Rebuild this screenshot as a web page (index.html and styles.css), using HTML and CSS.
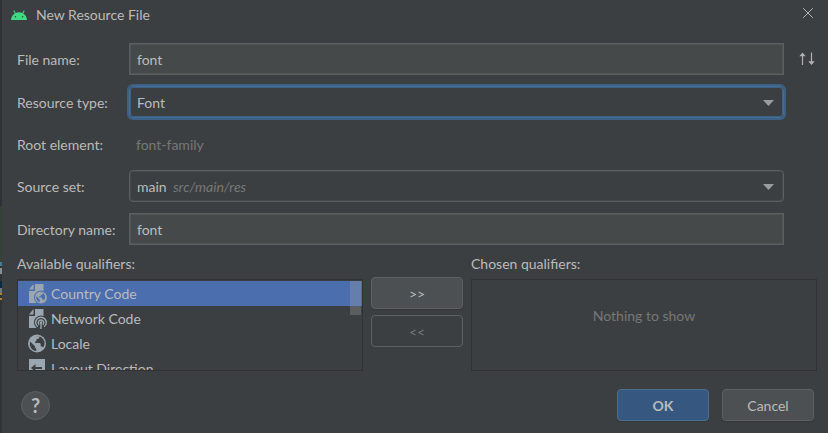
FILE: index.html
```html
<!DOCTYPE html>
<html lang="en">
<head>
<meta charset="utf-8">
<title>New Resource File</title>
<link rel="stylesheet" href="styles.css">
</head>
<body>
<main class="dialog">
  <header class="titlebar">
    <svg class="android" viewBox="0 0 16 10" width="16" height="10" aria-hidden="true">
      <path d="M0 10C.2 7 1.600 4.800 3.800 3.500L2.300.8 3.200.3 4.700 3C6.700 2.100 9.300 2.100 11.300 3L12.800.3 13.700.8 12.200 3.500C14.400 4.800 15.800 7 16 10Z" fill="#3ddc84"/>
      <circle cx="4.400" cy="6.700" r=".8" fill="#3c3f41"/><circle cx="11.600" cy="6.700" r=".8" fill="#3c3f41"/>
    </svg>
    <h1 class="title">New Resource File</h1>
    <button class="icon-button" type="button" aria-label="Close">
      <svg viewBox="0 0 10 10" width="10" height="10"><path d="M.2.2l9.600 9.600M9.800.2L.2 9.800" stroke="#b4b6b8" fill="none"/></svg>
    </button>
  </header>

  <form class="content">
    <div class="fields">
      <label for="file-name">File name:</label>
      <input class="field" id="file-name" type="text" value="font">
      <button class="icon-button sort" type="button" aria-label="Swap order">
        <svg viewBox="0 0 16 14" width="16" height="14"><path d="M3.500 13V2M12.500.5V12" stroke="#afb1b3" stroke-width="1.200" fill="none"/><path d="M.3 4.200L3.500.5l3.200 3.700zM9.300 9.300l3.200 3.700 3.200-3.700z" fill="#afb1b3"/></svg>
      </button>

      <label for="resource-type">Resource type:</label>
      <div class="combo focused">
        <select id="resource-type"><option>Font</option></select>
        <svg class="arrow" viewBox="0 0 11 6" width="11" height="6"><path d="M0 0h11L5.500 6z" fill="#9a9da0"/></svg>
      </div>

      <span class="row-label">Root element:</span>
      <output class="disabled-value">font-family</output>

      <label for="source-set">Source set:</label>
      <div class="combo">
        <select id="source-set"><option>main</option></select>
        <span class="hint">src/main/res</span>
        <svg class="arrow" viewBox="0 0 11 6" width="11" height="6"><path d="M0 0h11L5.500 6z" fill="#9a9da0"/></svg>
      </div>

      <label for="directory-name">Directory name:</label>
      <input class="field" id="directory-name" type="text" value="font">
    </div>

    <div class="qualifiers">
      <section class="column">
        <h2 class="caption">Available qualifiers:</h2>
        <div class="list">
          <ul class="items">
            <li class="item selected">
              <svg viewBox="0 0 20 20" width="20" height="20"><path d="M1 5.500h4.500V0zM7 0h8.500v19H1V7h6z" fill="#9aa7b0"/><circle cx="13" cy="13.500" r="7" fill="#4b6eaf"/><circle cx="13" cy="13.500" r="6" fill="#9aa7b0"/><path d="M8.200 12l3.500 3.500v2.800C8.800 17.300 7.700 14.800 8.200 12zM12 8.800h3.300l-.7 1.700-1.800.6-.4 1.300h-1.700l.4 1.100h2.700l.8 2 1.500.5c1.700-2 1.300-5.200-.7-6.700z" fill="#4b6eaf"/></svg>
              Country Code</li>
            <li class="item">
              <svg viewBox="0 0 20 20" width="20" height="20"><path d="M1 5.500h4.500V0zM7 0h8.500v19H1V7h6z" fill="#9aa7b0"/><circle cx="13" cy="13.500" r="7" fill="#3c3f41"/><path d="M9.800 17.800a5.300 5.300 0 1 1 6.400 0M11.200 15.700a2.700 2.700 0 1 1 3.600 0M13 13.500V20" stroke="#9aa7b0" stroke-width="1.400" fill="none"/><circle cx="13" cy="13.500" r="1.200" fill="#9aa7b0"/></svg>
              Network Code</li>
            <li class="item">
              <svg viewBox="0 0 20 20" width="20" height="20"><circle cx="9" cy="9.500" r="9" fill="#9aa7b0"/><path d="M2.200 7.500l4.900 4.900v1.300l1.200 1.200V17C3.500 16.500.8 12 2.200 7.500zM7.500 2.500h3.800v1.300l-1.200 1.300H8.500v1.700l-1.300.7v1.400h4.500l1 1v2.500h1.300l1 1.200c3.200-4 1.200-9-2.700-10.800z" fill="#3c3f41"/></svg>
              Locale</li>
            <li class="item">
              <svg viewBox="0 0 20 20" width="20" height="20"><path d="M1 0h16v18H1z" fill="#9aa7b0"/><path d="M3 9l4.500-4v3H14v2H7.500v3z" fill="#3c3f41"/></svg>
              Layout Direction</li>
          </ul>
          <span class="thumb"></span>
        </div>
      </section>
      <div class="transfer">
        <button class="button" type="button">&gt;&gt;</button>
        <button class="button" type="button" disabled>&lt;&lt;</button>
      </div>
      <section class="column">
        <h2 class="caption">Chosen qualifiers:</h2>
        <div class="list"><p class="empty">Nothing to show</p></div>
      </section>
    </div>

    <footer class="actions">
      <button class="help" type="button" aria-label="Help">?</button>
      <button class="button primary" type="submit">OK</button>
      <button class="button" type="button">Cancel</button>
    </footer>
  </form>
</main>
</body>
</html>
```
FILE: styles.css
```css
* { box-sizing: border-box; }
body {
  margin: 0;
  background: #3c3f41;
  color: #bbbbbb;
  font: 14px/20px Lato, "Open Sans", sans-serif;
}
button, input, select { font: inherit; color: inherit; }
h1, h2, p, ul { margin: 0; padding: 0; font: inherit; }
svg { display: block; flex: none; }
/* Sliver of the editor window behind the dialog's left edge */
.dialog {
  min-height: 100vh;
  padding-left: 2px;
  background: linear-gradient(#2f3133 206px, #364135 206px 262px, #3f7f9c 262px 266px, #313335 266px 268px, #8a8f92 268px 274px, #313335 274px 281px, #0d293e 281px 288px, #6c7880 288px 293px, #a8843c 293px 295px, #313335 295px 298px, #a8843c 298px 300px, #313335 300px) 0 0 / 2px 100% no-repeat;
}
.titlebar { display: flex; align-items: center; height: 30px; padding: 0 15px 0 9px; }
.title { flex: 1; margin-left: 9px; }
.icon-button { padding: 0 0 4px; border: 0; background: none; }
.content { padding: 13px 11px 12px 15px; }
.fields {
  display: grid;
  grid-template-columns: 112px 1fr 33px;
  grid-template-rows: 32px 32px 30px 32px 32px;
  row-gap: 11px;
  align-items: center;
}
.fields > label, .row-label { grid-column: 1; }
.field, .combo, .disabled-value { grid-column: 2; }
.fields > label, .row-label, .disabled-value { padding-top: 2px; }
.sort { justify-self: end; padding: 0; margin-right: 2px; }
.field {
  width: 100%;
  height: 32px;
  padding: 0 7px;
  background: #45494a;
  border: 1px solid #5c5f60;
  box-shadow: inset 0 0 0 1px #525556;
}
.combo { position: relative; height: 32px; border: 1px solid #5c5f60; border-radius: 4px; box-shadow: inset 0 0 0 1px #46494b; }
.combo.focused { border-color: #466d94; box-shadow: 0 0 0 2px #3d6185, inset 0 0 0 1px #3d6185; }
.combo select { width: 100%; height: 30px; padding: 2px 7px 0; border: 0; background: none; appearance: none; outline: 0; }
.hint { position: absolute; left: 43px; top: 6px; color: #787878; font-style: italic; pointer-events: none; }
.arrow { position: absolute; right: 9px; top: 13px; pointer-events: none; }
.disabled-value { padding-left: 7px; color: #777777; }
.qualifiers { display: grid; grid-template-columns: 1fr 92px 1fr; column-gap: 8px; margin-top: 9px; }
.caption { height: 25px; }
.list { position: relative; height: 92px; overflow: hidden; border: 1px solid #323232; }
.items { list-style: none; padding-top: 1px; }
.item { display: flex; align-items: center; gap: 3px; height: 25px; padding-left: 10px; }
.selected { background: #4b6eaf; }
.thumb { position: absolute; right: 1px; top: 1px; width: 11px; height: 34px; background: rgba(166, 166, 166, .3); }
.transfer { display: flex; flex-direction: column; gap: 6px; padding-top: 23px; }
.button {
  width: 92px;
  height: 32px;
  padding: 2px 0 0;
  background: #4c5052;
  border: 1px solid #5e6060;
  border-radius: 4px;
  box-shadow: 0 1px 1px #35383a;
}
.button:disabled { background: none; color: #777777; box-shadow: none; }
.primary { background: #365880; border-color: #4c708c; font-weight: bold; }
.empty { padding-top: 26px; text-align: center; color: #777777; }
.actions { display: flex; align-items: center; gap: 13px; margin-top: 18px; padding: 0 3px 0 4px; }
.help {
  width: 29px;
  height: 29px;
  margin-right: auto;
  padding: 0;
  border: 1px solid #5e6060;
  border-radius: 50%;
  background: #4c5052;
  font-size: 20px;
  font-weight: bold;
}
```
